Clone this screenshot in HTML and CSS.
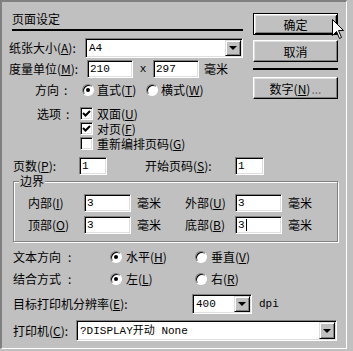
FILE: index.html
```html
<!DOCTYPE html>
<html lang="zh-CN">
<head>
    <meta charset="UTF-8">
    <title>页面设定</title>
    <link rel="stylesheet" href="styles.css">
</head>
<body>
    <div class="dialog">
        <div class="top">
            <div class="left">
                <div class="title">页面设定</div>
                <div class="row r-paper">
                    <span class="lbl w76">纸张大小(<u>A</u>):</span>
                    <div class="field combo w158"><span class="val">A4</span><span class="drop"></span></div>
                </div>
                <div class="row r-units">
                    <span class="lbl w78">度量单位(<u>M</u>):</span>
                    <div class="field w46"><span class="val">210</span></div>
                    <span class="times">x</span>
                    <div class="field w46"><span class="val">297</span></div>
                    <span class="unit">毫米</span>
                </div>
                <div class="row r-orient">
                    <span class="lbl w47">方向<span class="colon">:</span></span>
                    <span class="radio on"></span><span class="opt w49">直式(<u>T</u>)</span>
                    <span class="radio"></span><span class="opt">横式(<u>W</u>)</span>
                </div>
                <div class="options">
                    <span class="lbl w43">选项<span class="colon">:</span></span>
                    <div class="checks">
                        <div class="check-row">
                            <span class="check"><svg width="9" height="9" viewBox="0 0 9 9"><path d="M1 4 L3.5 6.5 L8 2" fill="none" stroke="#000" stroke-width="2"/></svg></span>双面(<u>U</u>)
                        </div>
                        <div class="check-row">
                            <span class="check"><svg width="9" height="9" viewBox="0 0 9 9"><path d="M1 4 L3.5 6.5 L8 2" fill="none" stroke="#000" stroke-width="2"/></svg></span>对页(<u>F</u>)
                        </div>
                        <div class="check-row">
                            <span class="check"></span>重新编排页码(<u>G</u>)
                        </div>
                    </div>
                </div>
            </div>
            <div class="buttons">
                <button class="btn default">确定</button>
                <button class="btn">取消</button>
                <div class="sep"></div>
                <button class="btn">数字(<u>N</u>)<span class="dim">...</span></button>
            </div>
        </div>

        <div class="row r-pages">
            <span class="lbl w66">页数(<u>P</u>):</span>
            <div class="field w28"><span class="val">1</span></div>
            <span class="lbl w90 start">开始页码(<u>S</u>):</span>
            <div class="field w29"><span class="val">1</span></div>
        </div>

        <fieldset class="margins">
            <legend>边界</legend>
            <div class="row m-row">
                <span class="lbl w56">内部(<u>I</u>)</span>
                <div class="field w47"><span class="val">3</span></div>
                <span class="unit w48">毫米</span>
                <span class="lbl w50">外部(<u>U</u>)</span>
                <div class="field w47"><span class="val">3</span></div>
                <span class="unit">毫米</span>
            </div>
            <div class="row m-row second">
                <span class="lbl w56">顶部(<u>O</u>)</span>
                <div class="field w47"><span class="val">3</span></div>
                <span class="unit w48">毫米</span>
                <span class="lbl w50">底部(<u>B</u>)</span>
                <div class="field w47"><span class="val">3</span><span class="caret"></span></div>
                <span class="unit">毫米</span>
            </div>
        </fieldset>

        <div class="row r-text">
            <span class="lbl w97">文本方向<span class="colon wide">:</span></span>
            <span class="radio on"></span><span class="opt w69">水平(<u>H</u>)</span>
            <span class="radio"></span><span class="opt">垂直(<u>V</u>)</span>
        </div>
        <div class="row r-bind">
            <span class="lbl w97">结合方式<span class="colon wide">:</span></span>
            <span class="radio on"></span><span class="opt w69">左(<u>L</u>)</span>
            <span class="radio"></span><span class="opt">右(<u>R</u>)</span>
        </div>
        <div class="row r-res">
            <span class="lbl w179">目标打印机分辨率(<u>E</u>):</span>
            <div class="field combo w60"><span class="val">400</span><span class="drop"></span></div>
            <span class="dpi">dpi</span>
        </div>
        <div class="row r-printer">
            <span class="lbl w63">打印机(<u>C</u>):</span>
            <div class="field combo w261"><span class="val">?DISPLAY开动 None</span><span class="drop"></span></div>
        </div>

        <svg class="cursor" width="13" height="21" viewBox="0 0 13 21">
            <path d="M0.5 0.5 L0.5 16.5 L4.5 12.5 L7.5 19.5 L9.5 18.5 L6.5 11.5 L11.5 11.5 Z" fill="#fff" stroke="#000" stroke-width="1"/>
        </svg>
    </div>
</body>
</html>
```

FILE: styles.css
```css
body {
    margin: 0;
    background-color: #c0c0c0;
    font-family: "Noto Sans CJK SC", sans-serif;
    font-size: 12px;
    line-height: 14px;
    color: #000;
}
.dialog {
    position: relative;
    box-sizing: border-box;
    width: 347px;
    height: 349px;
    border-top: 2px solid #808080;
    border-left: 2px solid #808080;
    border-right: 1px solid #fff;
    border-bottom: 1px solid #fff;
}
.top {
    display: flex;
}
.left {
    width: 243px;
}
.title {
    margin: 9px 0 0 10px;
    width: 231px;
    line-height: 16px;
    padding-bottom: 2px;
    border-bottom: 2px solid #000;
}
.row {
    display: flex;
    align-items: center;
}
.lbl {
    flex-shrink: 0;
    white-space: nowrap;
}
.colon {
    margin-left: 5px;
}
.colon.wide {
    margin-left: 7px;
}
.w28 { width: 28px; }
.w29 { width: 29px; }
.w43 { width: 43px; }
.w46 { width: 46px; }
.w47 { width: 47px; }
.w48 { width: 48px; }
.w49 { width: 49px; }
.w50 { width: 50px; }
.w56 { width: 56px; }
.w60 { width: 60px; }
.w63 { width: 63px; }
.w66 { width: 66px; }
.w69 { width: 69px; }
.w76 { width: 76px; }
.w78 { width: 78px; }
.w90 { width: 90px; }
.w97 { width: 97px; }
.w158 { width: 158px; }
.w179 { width: 179px; }
.w261 { width: 261px; }

/* sunken edit box */
.field {
    box-sizing: border-box;
    height: 100%;
    flex-shrink: 0;
    display: flex;
    align-items: center;
    background: #fff;
    border: 1px solid;
    border-color: #808080 #fff #fff #808080;
    box-shadow: inset 1px 1px #000, inset -1px -1px #dfdfdf;
}
.val {
    padding-left: 2px;
    font-family: "Liberation Mono", "Noto Sans CJK SC", monospace;
    font-size: 11px;
    white-space: nowrap;
}
.caret {
    width: 1px;
    height: 12px;
    margin-left: 1px;
    background: #000;
}
.combo {
    padding: 1px;
    align-items: stretch;
}
.combo .val {
    flex: 1;
    display: flex;
    align-items: center;
}
.drop {
    box-sizing: border-box;
    width: 16px;
    display: flex;
    align-items: center;
    justify-content: center;
    background: #c0c0c0;
    border: 1px solid;
    border-color: #dfdfdf #000 #000 #dfdfdf;
    box-shadow: inset 1px 1px #fff, inset -1px -1px #808080;
}
.drop::before {
    content: "";
    border-top: 4px solid #000;
    border-left: 4px solid transparent;
    border-right: 4px solid transparent;
}

.r-paper {
    margin-top: 7px;
    height: 20px;
    padding-left: 7px;
}
.r-units {
    margin-top: 2px;
    height: 18px;
    padding-left: 7px;
}
.times {
    width: 20px;
    text-align: center;
    font-family: "Liberation Mono", monospace;
    font-size: 11px;
}
.unit {
    margin-left: 5px;
    white-space: nowrap;
}
.r-orient {
    margin-top: 3px;
    height: 18px;
    padding-left: 33px;
}
.radio {
    position: relative;
    flex-shrink: 0;
    box-sizing: border-box;
    width: 12px;
    height: 12px;
    border-radius: 50%;
    background: #fff;
    border: 1px solid;
    border-color: #808080 #fff #fff #808080;
    box-shadow: inset 1px 1px #000;
}
.radio.on::after {
    content: "";
    position: absolute;
    left: 3px;
    top: 3px;
    width: 4px;
    height: 4px;
    border-radius: 50%;
    background: #000;
}
.opt {
    margin-left: 3px;
    white-space: nowrap;
}
.options {
    display: flex;
    margin-top: 7px;
    padding-left: 35px;
}
.options .lbl {
    line-height: 15px;
}
.check-row {
    display: flex;
    align-items: center;
    height: 15px;
    white-space: nowrap;
}
.check {
    box-sizing: border-box;
    flex-shrink: 0;
    width: 13px;
    height: 13px;
    margin-right: 4px;
    padding: 1px 0 0 1px;
    background: #fff;
    border: 1px solid;
    border-color: #808080 #fff #fff #808080;
    box-shadow: inset 1px 1px #000, inset -1px -1px #dfdfdf;
}
.check svg {
    display: block;
}

.buttons {
    margin-left: 8px;
    padding-top: 11px;
    display: flex;
    flex-direction: column;
}
.btn {
    box-sizing: border-box;
    width: 85px;
    height: 22px;
    padding: 0;
    background: #c0c0c0;
    border: 1px solid;
    border-color: #fff #000 #000 #fff;
    box-shadow: inset -1px -1px #808080, inset 1px 1px #dfdfdf;
    font-family: "Noto Sans CJK SC", sans-serif;
    font-size: 12px;
    color: #000;
}
.btn + .btn {
    margin-top: 5px;
}
.btn.default {
    border-color: #000;
    box-shadow: inset 1px 1px #fff, inset -1px -1px #000, inset 2px 2px #dfdfdf, inset -2px -2px #808080;
}
.dim {
    color: #707070;
    margin-left: 1px;
}
.sep {
    margin-top: 6px;
    height: 2px;
    background: #000;
}
.sep + .btn {
    margin-top: 7px;
}

.r-pages {
    margin-top: 6px;
    height: 18px;
    padding-left: 11px;
}
.start {
    margin-left: 38px;
}

.margins {
    box-sizing: border-box;
    width: 325px;
    margin: 0 0 0 11px;
    padding: 7px 0 7px 0;
    border: 1px solid #808080;
    box-shadow: 1px 1px #fff, inset 1px 1px #fff;
}
.margins legend {
    margin-left: 5px;
    padding: 0 1px;
    line-height: 12px;
    background: #c0c0c0;
}
.m-row {
    height: 18px;
    padding-left: 14px;
}
.m-row.second {
    margin-top: 4px;
}
.m-row .unit {
    margin-left: 6px;
}

.r-text {
    margin-top: 6px;
    height: 18px;
    padding-left: 11px;
}
.r-bind {
    margin-top: 4px;
    height: 18px;
    padding-left: 11px;
}
.r-text .opt + .radio,
.r-bind .opt + .radio {
    margin-left: 0;
}
.r-text .radio + .opt,
.r-bind .radio + .opt {
    margin-left: 4px;
}
.r-res {
    margin-top: 6px;
    height: 20px;
    padding-left: 11px;
}
.dpi {
    margin-left: 7px;
    font-family: "Liberation Mono", monospace;
    font-size: 11px;
}
.r-printer {
    margin-top: 6px;
    height: 21px;
    padding-left: 11px;
}

.cursor {
    position: absolute;
    left: 330px;
    top: 17px;
}
```
